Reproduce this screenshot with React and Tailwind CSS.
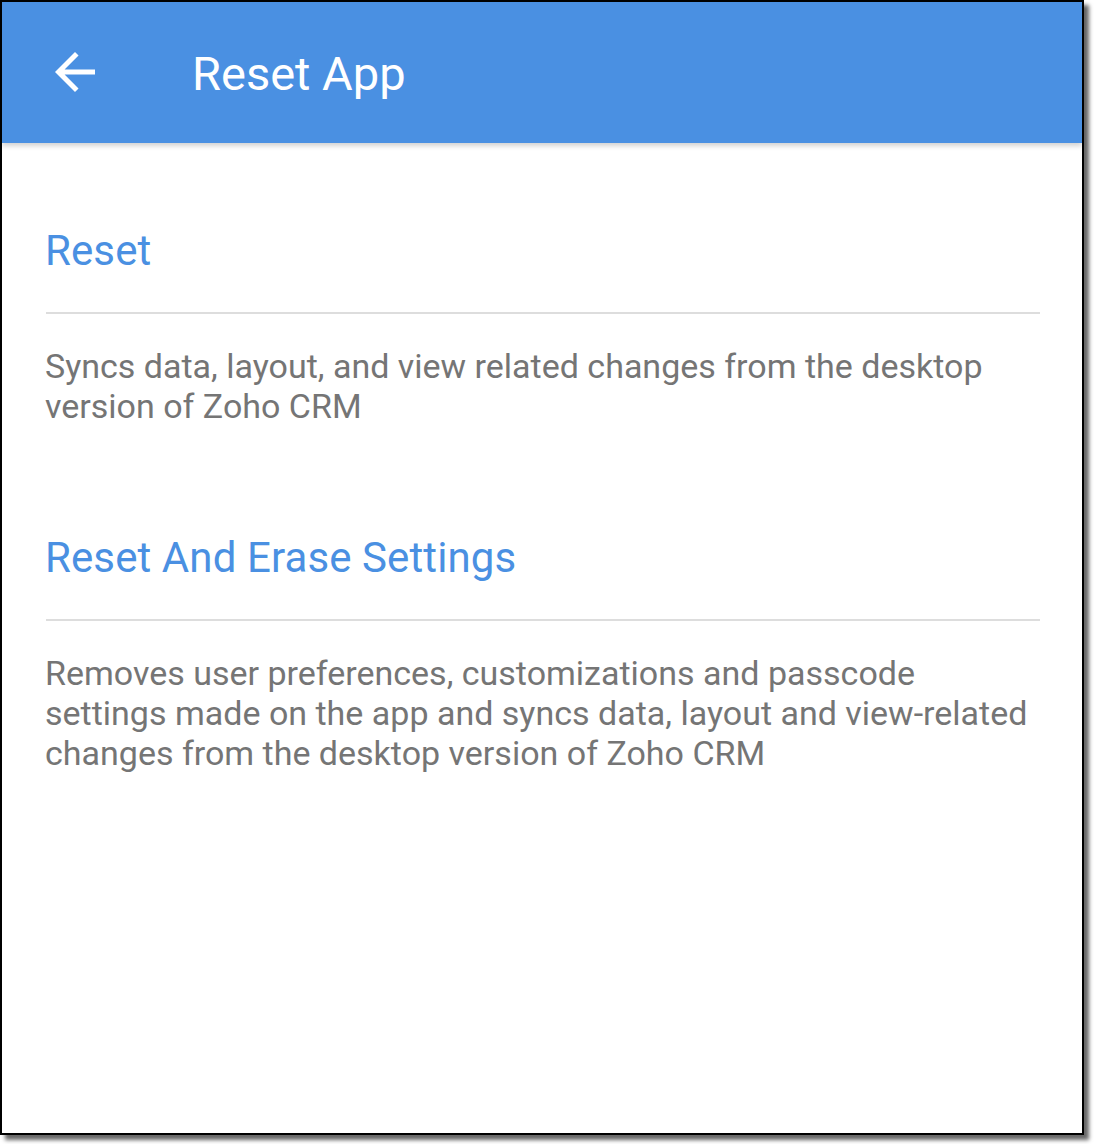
export default function App() {
  const font = { fontFamily: "Roboto, 'Noto Sans', sans-serif" };
  return (
    <div className="w-[1094px] h-[1144px] bg-white" style={font}>
      <div className="w-[1084px] h-[1135px] border-2 border-black bg-white shadow-[5px_5px_4px_rgba(0,0,0,0.6)] flex flex-col">
        <div className="h-[141px] bg-[#4a90e2] flex items-center shadow-[0_3px_5px_rgba(0,0,0,0.18)] relative z-10">
          <div className="w-[60px] h-[60px] ml-[43px] mt-[-2px]">
            <svg viewBox="0 0 24 24" width="60" height="60" fill="white">
              <path d="M20 11H7.83l5.59-5.59L12 4l-8 8 8 8 1.41-1.41L7.83 13H20v-2z" />
            </svg>
          </div>
          <div className="ml-[87px] text-white text-[47px] leading-none mt-[1px]">Reset App</div>
        </div>
        <div className="pl-[43px] pr-[42px]">
          <Section
            title="Reset"
            body="Syncs data, layout, and view related changes from the desktop version of Zoho CRM"
          />
          <Section
            title="Reset And Erase Settings"
            body="Removes user preferences, customizations and passcode settings made on the app and syncs data, layout and view-related changes from the desktop version of Zoho CRM"
          />
        </div>
      </div>
    </div>
  );
}

function Section({ title, body }) {
  return (
    <div className="h-[307px] pt-[84px]">
      <div className="text-[#4a90e2] text-[42px] leading-[48px] tracking-[0.1px]">{title}</div>
      <div className="h-[2px] bg-[#dddddd] mt-[37px] ml-[1px]" />
      <div className="mt-[32px] text-[#757575] text-[34px] leading-[40px]">{body}</div>
    </div>
  );
}
